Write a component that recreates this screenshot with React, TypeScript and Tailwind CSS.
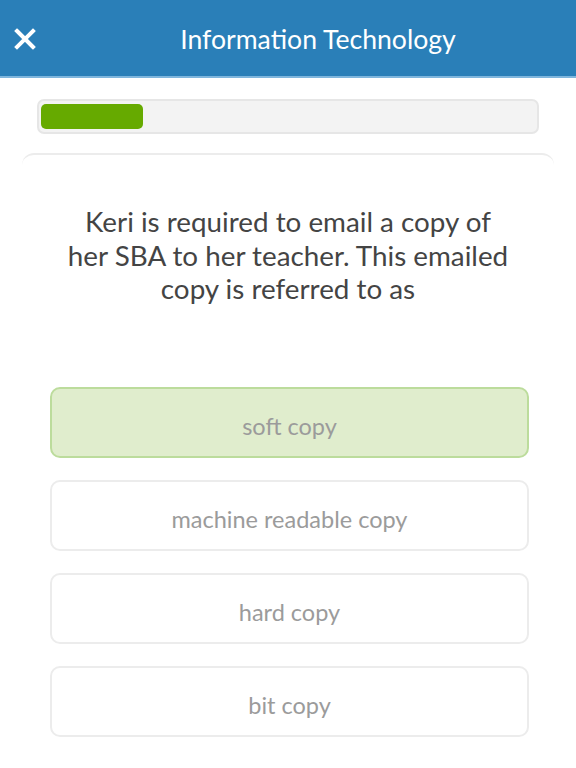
const options = [
  { label: "soft copy", selected: true },
  { label: "machine readable copy", selected: false },
  { label: "hard copy", selected: false },
  { label: "bit copy", selected: false },
];

export default function App() {
  const font = { fontFamily: "Lato, 'Open Sans', sans-serif" };
  return (
    <div className="w-[576px] h-[768px] bg-white overflow-hidden" style={font}>
      {/* Header */}
      <div className="h-[78px] bg-[#2a7fb8] border-b-2 border-[#7fb6dd] flex items-center">
        <button className="w-[60px] h-full flex items-center justify-center text-white" aria-label="Close">
          <svg width="22" height="22" viewBox="0 0 22 22" className="ml-[-10px] mt-[2px]">
            <path d="M3 3 L19 19 M19 3 L3 19" stroke="white" strokeWidth="4" strokeLinecap="square" />
          </svg>
        </button>
        <div className="flex-1 text-center text-white text-[26.6px] leading-none pt-[2px]">Information Technology</div>
      </div>

      {/* Progress */}
      <div className="px-[37px] pt-[21px]">
        <div className="h-[35px] bg-[#f3f3f3] border-2 border-[#e6e6e6] rounded-[7px] px-[2px] py-[3px]">
          <div className="h-full w-[102px] bg-[#66aa00] rounded-[5px]" />
        </div>
      </div>

      {/* Card */}
      <div className="mx-[22px] mt-[19px] border-t-2 border-[#ececec] rounded-t-[12px] h-[620px] pt-[50px]">
        <p className="text-[27.8px] leading-[33.5px] text-[#444] text-center px-[42px]">
          Keri is required to email a copy of her SBA to her teacher. This emailed copy is referred to as
        </p>
        <div className="mt-[81px] ml-[28px] w-[479px] flex flex-col gap-[22px]">
          {options.map((o) => (
            <div
              key={o.label}
              className={`h-[71px] rounded-[10px] border-2 flex items-center justify-center pt-[10px] text-[23.5px] text-[#9b9b9b] ${
                o.selected ? "bg-[#e0edcd] border-[#bcdc9c]" : "bg-white border-[#ececec]"
              }`}
            >
              {o.label}
            </div>
          ))}
        </div>
      </div>
    </div>
  );
}
